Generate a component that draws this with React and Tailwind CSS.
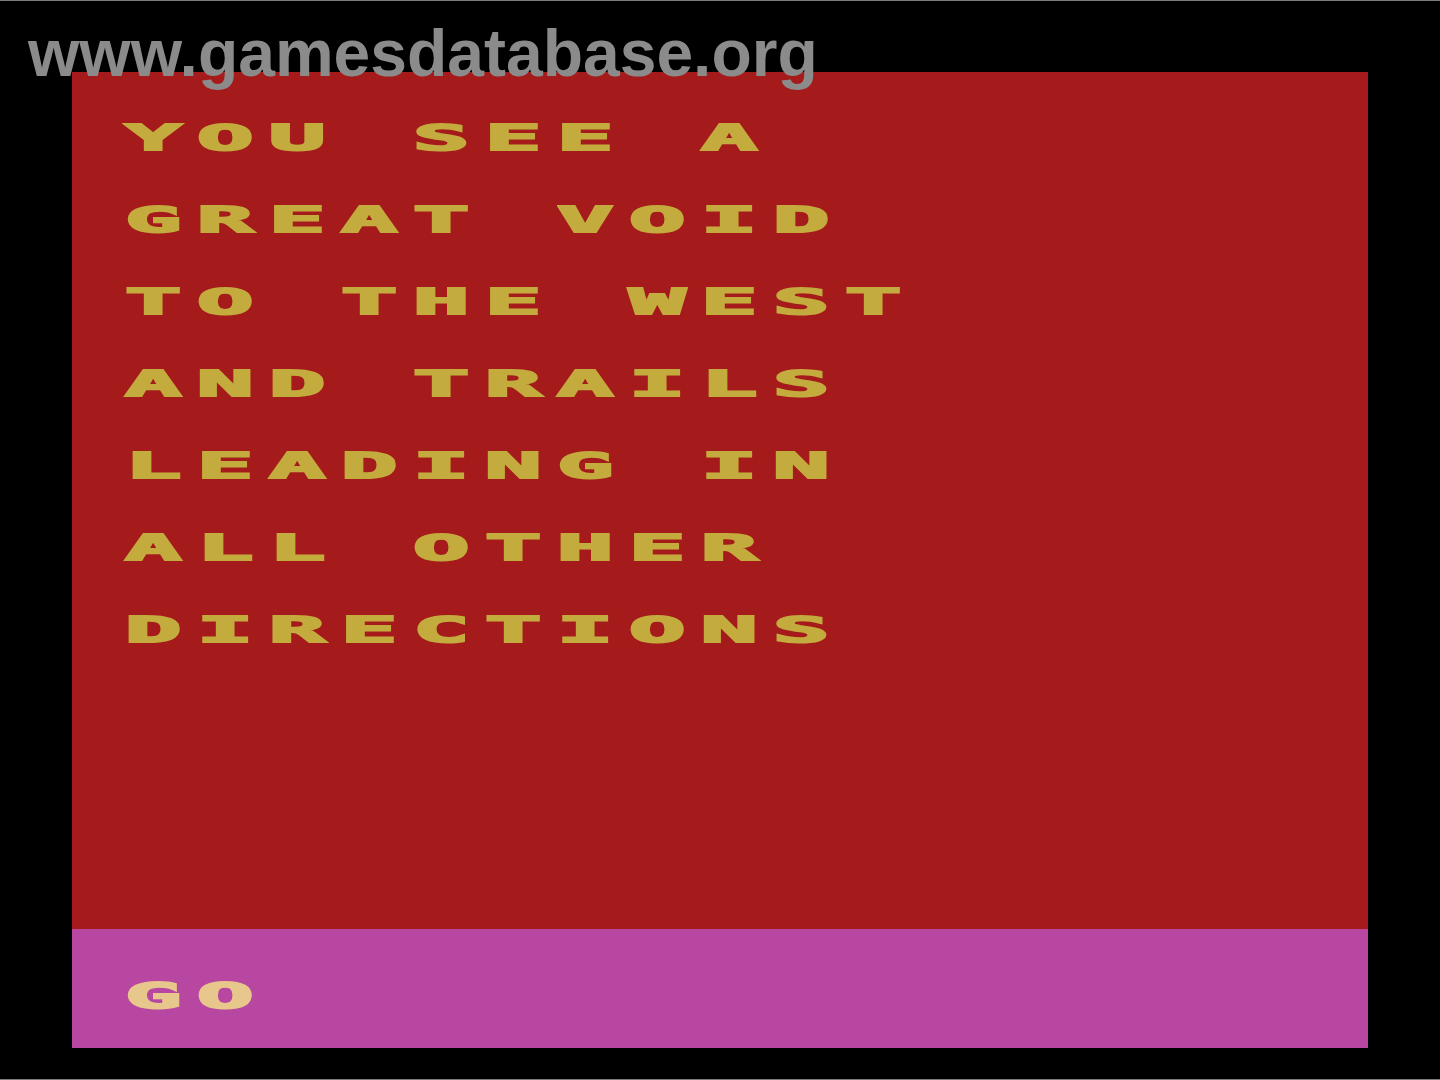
const lines = [
  "YOU SEE A",
  "GREAT VOID",
  "TO THE WEST",
  "AND TRAILS",
  "LEADING IN",
  "ALL OTHER",
  "DIRECTIONS",
];

// one fixed 72px cell per character, glyph stretched wide like the console font
function BlockLine({ text, color }) {
  return (
    <div className={`flex h-[82px] leading-[82px] ${color}`}>
      {text.split("").map((ch, i) => (
        <span key={i} className="inline-block w-[72px] shrink-0">
          <span className="inline-block origin-left scale-x-[2.6] [-webkit-text-stroke:2px_currentColor]">
            {ch === " " ? "\u00a0" : ch}
          </span>
        </span>
      ))}
    </div>
  );
}

export default function App() {
  return (
    <div className="relative w-[1440px] h-[1080px] bg-black border-t border-b border-[#7a7a7a] pt-[71px] px-[72px] overflow-hidden font-['DejaVu_Sans_Mono',monospace] font-bold text-[36px]">
      <div className="flex flex-col">
        {/* story panel */}
        <div className="h-[857px] bg-[#a51b1b] pt-[25px] pl-[53px]">
          {lines.map((l) => (
            <BlockLine key={l} text={l} color="text-[#c4ab3e]" />
          ))}
        </div>
        {/* command bar */}
        <div className="h-[119px] bg-[#b847a2] pt-[26px] pl-[53px]">
          <BlockLine text="GO" color="text-[#e8c78c]" />
        </div>
      </div>

      {/* site watermark */}
      <div className="absolute left-[28px] top-[18px] origin-left scale-x-[0.985] font-['Liberation_Sans',Arial,sans-serif] font-bold text-[67px] leading-none text-[#8b8b8b] whitespace-nowrap">
        www.gamesdatabase.org
      </div>
    </div>
  );
}
